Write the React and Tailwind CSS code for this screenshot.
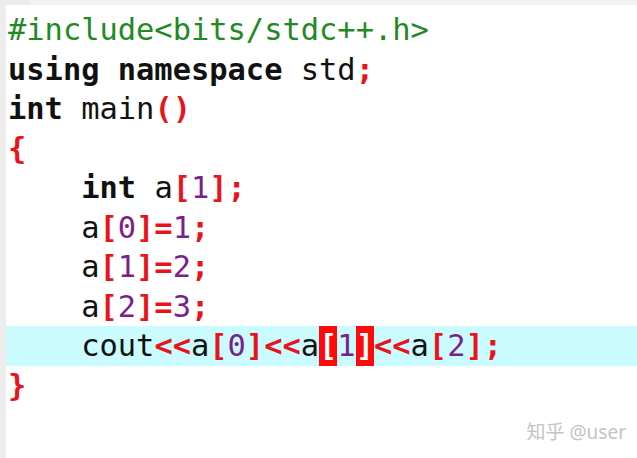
import React from "react";

const G = "text-[#1f8a24]";
const K = "font-bold text-[#111]";
const R = "font-bold text-[#e8141c]";
const N = "text-[#7a1f8c]";
const T = "text-[#111]";

function Line({ children, active }) {
  return (
    <div
      className={`h-[39.5px] leading-[39.5px] pl-[2px] whitespace-pre ${
        active ? "bg-[#c9fbff]" : ""
      }`}
    >
      {children}
    </div>
  );
}

function Hl({ children }) {
  return (
    <span className="inline-block align-top h-[40px] leading-[40px] bg-[#ff0a0a] text-white font-bold">
      {children}
    </span>
  );
}

export default function App() {
  return (
    <div className="w-[637px] h-[458px] bg-white flex flex-col overflow-hidden">
      {/* top strip */}
      <div className="h-[5px] flex">
        <div className="w-[30px] bg-[#ececec]" />
        <div className="flex-1 bg-[#f2f2f2]" />
      </div>

      <div className="flex flex-1">
        {/* gutter */}
        <div className="w-[6px] bg-[#ededed]" />

        <div
          className="flex-1 flex flex-col pt-[5px] text-[30.4px]"
          style={{ fontFamily: '"DejaVu Sans Mono", "Liberation Mono", monospace' }}
        >
          <Line>
            <span className={G}>#include&lt;bits/stdc++.h&gt;</span>
          </Line>
          <Line>
            <span className={K}>using</span> <span className={K}>namespace</span>{" "}
            <span className={T}>std</span>
            <span className={R}>;</span>
          </Line>
          <Line>
            <span className={K}>int</span> <span className={T}>main</span>
            <span className={R}>()</span>
          </Line>
          <Line>
            <span className={R}>{"{"}</span>
          </Line>
          <Line>
            {"    "}
            <span className={K}>int</span> <span className={T}>a</span>
            <span className={R}>[</span>
            <span className={N}>1</span>
            <span className={R}>];</span>
          </Line>
          <Line>
            {"    "}
            <span className={T}>a</span>
            <span className={R}>[</span>
            <span className={N}>0</span>
            <span className={R}>]=</span>
            <span className={N}>1</span>
            <span className={R}>;</span>
          </Line>
          <Line>
            {"    "}
            <span className={T}>a</span>
            <span className={R}>[</span>
            <span className={N}>1</span>
            <span className={R}>]=</span>
            <span className={N}>2</span>
            <span className={R}>;</span>
          </Line>
          <Line>
            {"    "}
            <span className={T}>a</span>
            <span className={R}>[</span>
            <span className={N}>2</span>
            <span className={R}>]=</span>
            <span className={N}>3</span>
            <span className={R}>;</span>
          </Line>
          <Line active>
            {"    "}
            <span className={T}>cout</span>
            <span className={R}>&lt;&lt;</span>
            <span className={T}>a</span>
            <span className={R}>[</span>
            <span className={N}>0</span>
            <span className={R}>]&lt;&lt;</span>
            <span className={T}>a</span>
            <Hl>[</Hl>
            <span className={N}>1</span>
            <Hl>]</Hl>
            <span className={R}>&lt;&lt;</span>
            <span className={T}>a</span>
            <span className={R}>[</span>
            <span className={N}>2</span>
            <span className={R}>];</span>
          </Line>
          <Line>
            <span className={R}>{"}"}</span>
          </Line>

          {/* watermark */}
          <div className="flex justify-end pr-[11px] pt-[16px]">
            <span
              className="text-[19px] leading-[22px] text-[#c4c4c4]"
              style={{ fontFamily: '"Noto Sans", "Noto Sans CJK SC", sans-serif' }}
            >
              知乎 @user
            </span>
          </div>
        </div>
      </div>
    </div>
  );
}
